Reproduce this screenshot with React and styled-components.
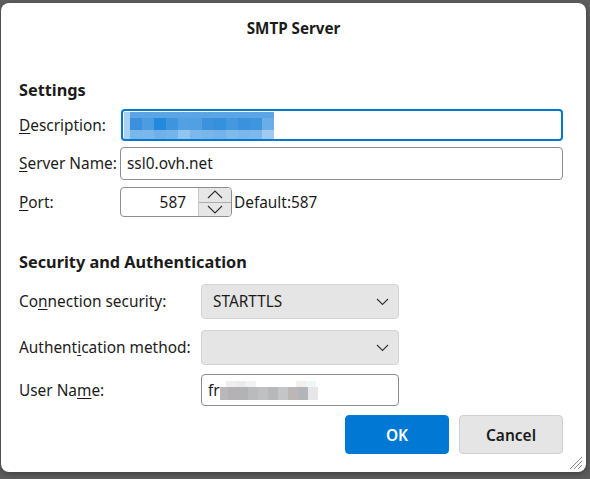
import React from 'react';
import styled, { createGlobalStyle } from 'styled-components';

const GlobalStyle = createGlobalStyle`
  html, body {
    margin: 0;
    padding: 0;
    background: #5e5e5e;
  }
  body {
    font-family: "Noto Sans", "Open Sans", sans-serif;
    color: #1b1b1b;
  }
`;

const Screen = styled.div`
  width: 590px;
  height: 479px;
  padding: 3px 0 0 1px;
  box-sizing: border-box;
`;

const Dialog = styled.div`
  position: relative;
  width: 585px;
  height: 469px;
  background: #ffffff;
  border-radius: 8px;
  box-shadow: 0 2px 6px rgba(0, 0, 0, 0.35);
  padding: 0 23px 0 18px;
  box-sizing: border-box;
  display: flex;
  flex-direction: column;
  font-size: 15.4px;
`;

const TitleBar = styled.div`
  height: 50px;
  display: flex;
  align-items: center;
  justify-content: center;
  font-weight: 700;
  font-size: 15.2px;
  padding-left: 5px;
`;

const Heading = styled.h2`
  margin: ${p => p.$top}px 0 0;
  font-size: 16.3px;
  line-height: 22px;
  font-weight: 700;
`;

const FormGrid = styled.div`
  display: grid;
  grid-template-columns: ${p => p.$label}px 1fr;
  align-items: center;
  margin-top: ${p => p.$top}px;
`;

const Label = styled.label`
  white-space: nowrap;
  margin-top: ${p => p.$top || 0}px;
  u { text-decoration-thickness: 1px; text-underline-offset: 2px; }
`;

const Field = styled.div`
  box-sizing: border-box;
  height: ${p => p.$h}px;
  width: ${p => (p.$w ? `${p.$w}px` : '100%')};
  margin-top: ${p => p.$top || 0}px;
  margin-left: ${p => p.$shift || 0}px;
  border: ${p => (p.$focused ? '2px solid #0078d4' : '1px solid #8d8d8d')};
  border-radius: 4px;
  background: #fff;
  display: flex;
  align-items: center;
  padding: 0 ${p => (p.$focused ? 1 : 6)}px;
  overflow: hidden;
`;

const PortRow = styled.div`
  display: flex;
  align-items: center;
  margin-top: 7px;
  margin-left: -1px;
  gap: 2px;
`;

const PortBox = styled.div`
  box-sizing: border-box;
  width: 112px;
  height: 30px;
  border: 1px solid #8d8d8d;
  border-radius: 4px;
  display: flex;
  overflow: hidden;
`;

const PortValue = styled.div`
  flex: 1;
  display: flex;
  align-items: center;
  justify-content: flex-end;
  padding-right: 12px;
`;

const Spinner = styled.div`
  width: 32px;
  display: flex;
  flex-direction: column;
  border-left: 1px solid #c9c9c9;
`;

const SpinButton = styled.div`
  flex: 1;
  background: #e6e6e6;
  display: flex;
  align-items: center;
  justify-content: center;
  border-top: ${p => (p.$lower ? '1px solid #adadad' : 'none')};
`;

const Select = styled.div`
  box-sizing: border-box;
  width: 198px;
  height: 35px;
  margin-top: ${p => p.$top || 0}px;
  background: #e5e5e5;
  border: 1px solid #d3d3d3;
  border-radius: 4px;
  display: flex;
  align-items: center;
  justify-content: space-between;
  padding: 0 9px 0 11px;
`;

const Mosaic = styled.div`
  display: flex;
  flex-direction: column;
`;

const MosaicRow = styled.div`
  display: flex;
  height: ${p => p.$h}px;
`;

const Cell = styled.div`
  width: ${p => p.$w}px;
  height: 100%;
`;

const Buttons = styled.div`
  display: flex;
  justify-content: flex-end;
  gap: 10px;
  margin-top: 9px;
`;

const Button = styled.button`
  width: 104px;
  height: 39px;
  border-radius: 4px;
  font-family: inherit;
  font-size: 15.5px;
  font-weight: 600;
  border: 1px solid ${p => (p.$primary ? '#0078d4' : '#d0d0d0')};
  background: ${p => (p.$primary ? '#0078d4' : '#e5e5e5')};
  color: ${p => (p.$primary ? '#ffffff' : '#1b1b1b')};
`;

const Grip = styled.svg`
  position: absolute;
  right: 3px;
  bottom: 2px;
`;

const Chevron = ({ up }) => (
  <svg width="16" height="9" viewBox="0 0 16 9">
    <polyline
      points={up ? '1,8 8,1 15,8' : '1,1 8,8 15,1'}
      fill="none"
      stroke="#333"
      strokeWidth="1.2"
    />
  </svg>
);

const SmallChevron = () => (
  <svg width="13" height="8" viewBox="0 0 13 8">
    <polyline points="1,1 6.5,6.5 12,1" fill="none" stroke="#333" strokeWidth="1.1" />
  </svg>
);

const descTop = '#5ba5e5';
const descEdge = '#a9d1f1';
const descMid = ['#3a90dc', '#4c9ce0', '#2389dc', '#3f94de', '#53a1e2', '#52a0e2', '#3d92dd', '#3590dd', '#4399df', '#3a92dd', '#3d95de', '#6badE6'];
const descLow = ['#79b6ea', '#7ab7ea', '#6fb0e8', '#75b4e9', '#93c4ef', '#7cb8eb', '#78b6ea', '#74b3e9', '#80baeb', '#7bb7ea', '#7fb9eb', '#a0cbf0'];

const userTop = ['#ffffff', '#eeeeee', '#ebebeb', '#f2f2f2', '#ffffff', '#ffffff', '#ffffff', '#ffffff', '#f5efec', '#f0f5f8', '#ffffff'];
const userLow = ['#b9b7b9', '#b4b2b4', '#b3b2b5', '#babbbc', '#c0c0c2', '#b7b8ba', '#c5c4c6', '#bdb6b6', '#b2b5ba', '#e6e6e8'];

export default function App() {
  return (
    <Screen>
      <GlobalStyle />
      <Dialog>
        <TitleBar>SMTP Server</TitleBar>

        <Heading $top={26}>Settings</Heading>
        <FormGrid $label={102} $top={8}>
          <Label><u>D</u>escription:</Label>
          <Field $h={32} $focused>
            <Mosaic>
              <MosaicRow $h={6}>
                <Cell $w={6} style={{ background: descEdge }} />
                <Cell $w={144} style={{ background: descTop }} />
              </MosaicRow>
              <MosaicRow $h={12}>
                <Cell $w={6} style={{ background: descEdge }} />
                {descMid.map((c, i) => <Cell key={i} $w={12} style={{ background: c }} />)}
              </MosaicRow>
              <MosaicRow $h={9}>
                <Cell $w={6} style={{ background: descEdge }} />
                {descLow.map((c, i) => <Cell key={i} $w={12} style={{ background: c }} />)}
              </MosaicRow>
            </Mosaic>
          </Field>

          <Label $top={6}><u>S</u>erver Name:</Label>
          <Field $h={33} $top={6} $shift={-1} style={{ width: 'calc(100% + 1px)' }}>ssl0.ovh.net</Field>

          <Label $top={7}><u>P</u>ort:</Label>
          <PortRow>
            <PortBox>
              <PortValue>587</PortValue>
              <Spinner>
                <SpinButton><Chevron up /></SpinButton>
                <SpinButton $lower><Chevron /></SpinButton>
              </Spinner>
            </PortBox>
            <span>Default:587</span>
          </PortRow>
        </FormGrid>

        <Heading $top={34}>Security and Authentication</Heading>
        <FormGrid $label={182} $top={11}>
          <Label>Co<u>n</u>nection security:</Label>
          <Select>
            <span>STARTTLS</span>
            <SmallChevron />
          </Select>

          <Label $top={11}>Authent<u>i</u>cation method:</Label>
          <Select $top={11}>
            <span />
            <SmallChevron />
          </Select>

          <Label $top={9}>User Na<u>m</u>e:</Label>
          <Field $h={32} $w={198} $top={9}>
            <span>fr</span>
            <Mosaic>
              <MosaicRow $h={6}>
                {userTop.map((c, i) => <Cell key={i} $w={i === 0 ? 6 : 10} style={{ background: c }} />)}
              </MosaicRow>
              <MosaicRow $h={13}>
                {userLow.map((c, i) => <Cell key={i} $w={i === 0 ? 8 : 10} style={{ background: c }} />)}
              </MosaicRow>
            </Mosaic>
          </Field>
        </FormGrid>

        <Buttons>
          <Button $primary>OK</Button>
          <Button>Cancel</Button>
        </Buttons>

        <Grip width="16" height="16" viewBox="0 0 16 16">
          <line x1="15" y1="3" x2="3" y2="15" stroke="#8a8a8a" strokeWidth="1" />
          <line x1="15" y1="7" x2="7" y2="15" stroke="#8a8a8a" strokeWidth="1" />
          <line x1="15" y1="11" x2="11" y2="15" stroke="#8a8a8a" strokeWidth="1" />
        </Grip>
      </Dialog>
    </Screen>
  );
}
